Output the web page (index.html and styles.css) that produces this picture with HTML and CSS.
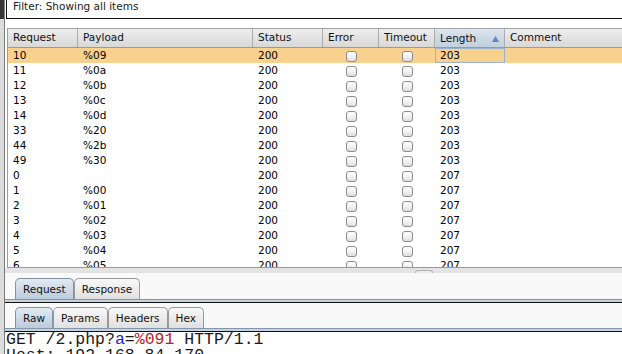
FILE: index.html
```
<!DOCTYPE html>
<html lang="en">
<head>
    <meta charset="UTF-8">
    <title>Intruder Results</title>
    <link rel="stylesheet" href="styles.css">
</head>
<body>
    <div class="window">
        <div class="gutter"><div class="gutter-top"></div></div>

        <div class="main">
            <div class="filter">Filter: Showing all items</div>

            <div class="results">
                <div class="cols head">
                    <div class="th">Request</div>
                    <div class="th">Payload</div>
                    <div class="th">Status</div>
                    <div class="th">Error</div>
                    <div class="th">Timeout</div>
                    <div class="th sorted">Length
                        <svg class="sort" width="7" height="6" viewBox="0 0 7 6"><path d="M3.5 0 L7 6 L0 6 Z" fill="#5b87c2"/></svg>
                    </div>
                    <div class="th last">Comment</div>
                </div>

                <div class="rows">
                    <div class="cols row selected"><div>10</div><div>%09</div><div>200</div><div class="chk"><span class="box"></span></div><div class="chk"><span class="box"></span></div><div class="focus">203</div><div></div></div>
                    <div class="cols row"><div>11</div><div>%0a</div><div>200</div><div class="chk"><span class="box"></span></div><div class="chk"><span class="box"></span></div><div>203</div><div></div></div>
                    <div class="cols row"><div>12</div><div>%0b</div><div>200</div><div class="chk"><span class="box"></span></div><div class="chk"><span class="box"></span></div><div>203</div><div></div></div>
                    <div class="cols row"><div>13</div><div>%0c</div><div>200</div><div class="chk"><span class="box"></span></div><div class="chk"><span class="box"></span></div><div>203</div><div></div></div>
                    <div class="cols row"><div>14</div><div>%0d</div><div>200</div><div class="chk"><span class="box"></span></div><div class="chk"><span class="box"></span></div><div>203</div><div></div></div>
                    <div class="cols row"><div>33</div><div>%20</div><div>200</div><div class="chk"><span class="box"></span></div><div class="chk"><span class="box"></span></div><div>203</div><div></div></div>
                    <div class="cols row"><div>44</div><div>%2b</div><div>200</div><div class="chk"><span class="box"></span></div><div class="chk"><span class="box"></span></div><div>203</div><div></div></div>
                    <div class="cols row"><div>49</div><div>%30</div><div>200</div><div class="chk"><span class="box"></span></div><div class="chk"><span class="box"></span></div><div>203</div><div></div></div>
                    <div class="cols row"><div>0</div><div></div><div>200</div><div class="chk"><span class="box"></span></div><div class="chk"><span class="box"></span></div><div>207</div><div></div></div>
                    <div class="cols row"><div>1</div><div>%00</div><div>200</div><div class="chk"><span class="box"></span></div><div class="chk"><span class="box"></span></div><div>207</div><div></div></div>
                    <div class="cols row"><div>2</div><div>%01</div><div>200</div><div class="chk"><span class="box"></span></div><div class="chk"><span class="box"></span></div><div>207</div><div></div></div>
                    <div class="cols row"><div>3</div><div>%02</div><div>200</div><div class="chk"><span class="box"></span></div><div class="chk"><span class="box"></span></div><div>207</div><div></div></div>
                    <div class="cols row"><div>4</div><div>%03</div><div>200</div><div class="chk"><span class="box"></span></div><div class="chk"><span class="box"></span></div><div>207</div><div></div></div>
                    <div class="cols row"><div>5</div><div>%04</div><div>200</div><div class="chk"><span class="box"></span></div><div class="chk"><span class="box"></span></div><div>207</div><div></div></div>
                    <div class="cols row"><div>6</div><div>%05</div><div>200</div><div class="chk"><span class="box"></span></div><div class="chk"><span class="box"></span></div><div>207</div><div></div></div>
                </div>
            </div>

            <div class="splitter"><span class="grip"></span></div>

            <div class="tabstrip">
                <span class="tab active">Request</span>
                <span class="tab">Response</span>
            </div>
            <div class="tabbar"></div>

            <div class="tabstrip sub">
                <span class="tab active">Raw</span>
                <span class="tab">Params</span>
                <span class="tab">Headers</span>
                <span class="tab">Hex</span>
            </div>
            <div class="tabbar"></div>

<pre class="raw">GET /2.php?<span class="pname">a</span>=<span class="pval">%091</span> HTTP/1.1
Host: 192.168.84.170</pre>
        </div>
    </div>
</body>
</html>
```

FILE: styles.css
```
* {
    margin: 0;
    padding: 0;
    box-sizing: border-box;
}

body {
    font-family: "DejaVu Sans", sans-serif;
    font-size: 10.5px;
    color: #000;
    background: #e2e2e2;
    height: 354px;
    overflow: hidden;
}

.window {
    display: flex;
    height: 354px;
}

.gutter {
    width: 4px;
    background: #dcdcdc;
}

.gutter-top {
    height: 19px;
    background: #363636;
}

.main {
    flex: 1;
    display: flex;
    flex-direction: column;
    background: #fff;
    border-left: 1px solid #7c7c7c;
    min-width: 0;
}

.main > * {
    flex-shrink: 0;
}

/* filter box */
.filter {
    height: 19px;
    margin-left: 1px;
    padding-left: 6px;
    line-height: 12px;
    color: #1a1a1a;
    border-left: 1px solid #111;
    border-bottom: 1px solid #111;
}

/* results table */
.results {
    margin-top: 9px;
    margin-left: 2px;
    border-left: 1px solid #9c9c9c;
    border-bottom: 1px solid #9a9a9a;
}

.cols {
    display: grid;
    grid-template-columns: 70px 175px 70px 56px 56px 70px 1fr;
}

.head {
    border-top: 1px solid #a2a2a2;
    border-bottom: 1px solid #9a9a9a;
    background: linear-gradient(#eeeeee, #e3e3e3 45%, #d9d9d9);
}

.th {
    height: 18px;
    line-height: 17px;
    padding-left: 5px;
    border-right: 1px solid #ababab;
    color: #111;
    white-space: nowrap;
    overflow: hidden;
}

.th.last {
    border-right: none;
}

.th.sorted {
    display: flex;
    align-items: center;
    justify-content: space-between;
    padding-right: 5px;
    background: linear-gradient(#dfe7ef, #cdd9e5 45%, #c2d0de);
}

.sort {
    margin-top: 1px;
}

.rows {
    height: 219px;
    overflow: hidden;
}

.row {
    height: 15px;
    line-height: 15px;
}

.row > div {
    padding-left: 5px;
    white-space: nowrap;
}

.row.selected {
    background: #f8d18f;
}

.row .focus {
    box-shadow: inset 0 0 0 1px #9cb3cf;
}

.row .chk {
    display: flex;
    justify-content: center;
    align-items: center;
    padding-left: 0;
    padding-top: 1px;
}

.box {
    display: block;
    width: 11px;
    height: 11px;
    border: 1px solid #8c8c8c;
    border-radius: 3px;
    background: linear-gradient(#ffffff, #f2f2f2 50%, #dedede);
}

/* splitter */
.splitter {
    height: 5px;
    background: #e3e3e3;
    padding-left: 410px;
    padding-top: 2px;
}

.grip {
    display: block;
    width: 18px;
    height: 3px;
    border: 1px solid #b4b4b4;
    border-bottom: none;
    border-radius: 3px 3px 0 0;
    background: #ececec;
}

/* tabs */
.tabstrip {
    height: 26px;
    padding-left: 10px;
    display: flex;
    align-items: flex-end;
    background: #f9f9f9;
}

.tabstrip.sub {
    height: 25px;
}

.tab {
    height: 21px;
    line-height: 20px;
    padding: 0 7px;
    border: 1px solid #9a9a9a;
    border-bottom: none;
    border-radius: 5px 5px 0 0;
    background: linear-gradient(#f8f8f8, #ececec 50%, #e0e0e0);
    color: #111;
}

.tab.active {
    border-color: #8393a6;
    background: linear-gradient(#e2eaf2, #cfdbe7 50%, #bccbda);
}

.tabbar {
    height: 4px;
    border-top: 1px solid #8596aa;
    border-bottom: 1px solid #111;
    background: #c5d3e1;
}

/* raw request */
.raw {
    flex: 1 1 0;
    min-height: 0;
    overflow: hidden;
    padding-left: 1px;
    font-family: "Liberation Mono", monospace;
    font-size: 16.5px;
    line-height: 16px;
    color: #1a1a1a;
    background: #fff;
}

.pname {
    color: #1c1ccc;
}

.pval {
    color: #b3221f;
}
```
